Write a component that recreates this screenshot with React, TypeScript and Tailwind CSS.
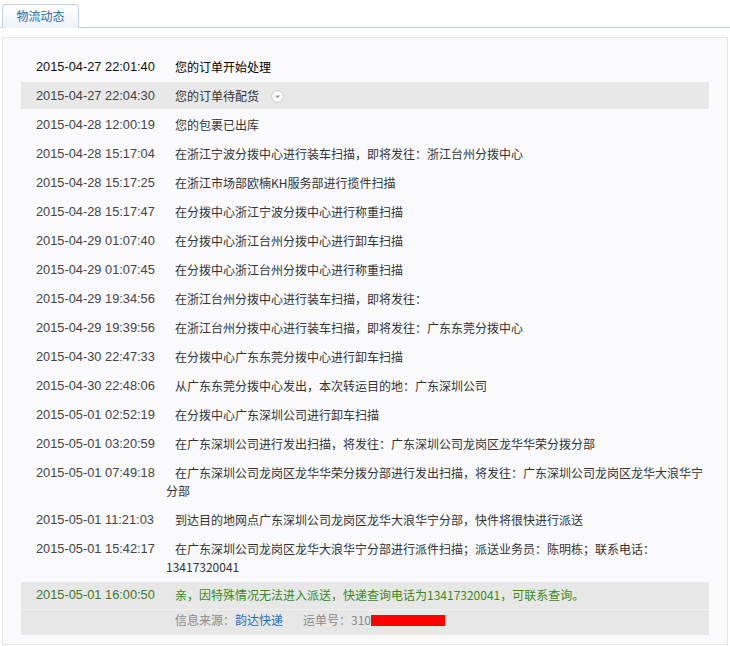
import React from 'react';

type Row = { time: string; text: string };

const rows: Row[] = [
  { time: '2015-04-27 22:01:40', text: '您的订单开始处理' },
  { time: '2015-04-27 22:04:30', text: '您的订单待配货' },
  { time: '2015-04-28 12:00:19', text: '您的包裹已出库' },
  { time: '2015-04-28 15:17:04', text: '在浙江宁波分拨中心进行装车扫描，即将发往：浙江台州分拨中心' },
  { time: '2015-04-28 15:17:25', text: '在浙江市场部欧楠KH服务部进行揽件扫描' },
  { time: '2015-04-28 15:17:47', text: '在分拨中心浙江宁波分拨中心进行称重扫描' },
  { time: '2015-04-29 01:07:40', text: '在分拨中心浙江台州分拨中心进行卸车扫描' },
  { time: '2015-04-29 01:07:45', text: '在分拨中心浙江台州分拨中心进行称重扫描' },
  { time: '2015-04-29 19:34:56', text: '在浙江台州分拨中心进行装车扫描，即将发往：' },
  { time: '2015-04-29 19:39:56', text: '在浙江台州分拨中心进行装车扫描，即将发往：广东东莞分拨中心' },
  { time: '2015-04-30 22:47:33', text: '在分拨中心广东东莞分拨中心进行卸车扫描' },
  { time: '2015-04-30 22:48:06', text: '从广东东莞分拨中心发出，本次转运目的地：广东深圳公司' },
  { time: '2015-05-01 02:52:19', text: '在分拨中心广东深圳公司进行卸车扫描' },
  { time: '2015-05-01 03:20:59', text: '在广东深圳公司进行发出扫描，将发往：广东深圳公司龙岗区龙华华荣分拨分部' },
  {
    time: '2015-05-01 07:49:18',
    text: '在广东深圳公司龙岗区龙华华荣分拨分部进行发出扫描，将发往：广东深圳公司龙岗区龙华大浪华宁分部',
  },
  { time: '2015-05-01 11:21:03', text: '到达目的地网点广东深圳公司龙岗区龙华大浪华宁分部，快件将很快进行派送' },
  {
    time: '2015-05-01 15:42:17',
    text: '在广东深圳公司龙岗区龙华大浪华宁分部进行派件扫描；派送业务员：陈明栋；联系电话：13417320041',
  },
];

const cjk = "font-['SimSun','Noto_Sans_CJK_SC',sans-serif]";

function Arrow() {
  return (
    <svg width="13" height="13" viewBox="0 0 13 13" className="ml-[12px] inline-block align-[-2px]">
      <circle cx="6.5" cy="6.5" r="5.8" fill="#fff" stroke="#c8c8c8" strokeWidth="1" />
      <path d="M4 5.5 L9 5.5 L6.5 8.2 Z" fill="#999" />
    </svg>
  );
}

export default function App() {
  return (
    <div className={`w-[730px] h-[646px] bg-white overflow-hidden text-[12px] ${cjk}`}>
      <div className="pt-[4px] border-b border-[#c3cfdd]">
        <div className="ml-[2px] w-[77px] h-[24px] -mb-px rounded-t-[4px] border border-[#c3d1e2] border-b-[#eef3f9] bg-gradient-to-b from-white to-[#edf3fa] flex items-center justify-center text-[#2a6aa0] text-[12px] leading-[18px]">
          物流动态
        </div>
      </div>

      <div className="mt-[9px] mx-[2px] h-[608px] border border-[#e6e6e8] bg-[#fafafc] pt-[15px] px-[18px] flex flex-col gap-[2px]">
        {rows.map((r, i) => (
          <div
            key={r.time}
            className={`flex pl-[15px] pr-[3px] pt-[5px] pb-[4px] leading-[18px] ${
              i === 1 ? 'bg-[#e8e8e8]' : ''
            }`}
          >
            <div
              className={`w-[130px] shrink-0 font-['Tahoma','Liberation_Sans',sans-serif] text-[12.8px] ${
                i === 0 ? 'text-[#111]' : 'text-[#444]'
              }`}
            >
              {r.time}
            </div>
            <div className={`flex-1 indent-[9px] ${i === 0 ? 'text-black' : 'text-[#333]'}`}>
              {r.text}
              {i === 1 && <Arrow />}
            </div>
          </div>
        ))}

        <div className="bg-[#e7e7e7] leading-[18px]">
          <div className="flex pl-[15px] pr-[3px] pt-[4px] pb-[5px] border-b border-[#f0f0f0]">
            <div className="w-[130px] shrink-0 font-['Tahoma','Liberation_Sans',sans-serif] text-[12.8px] text-[#3e7a23]">
              2015-05-01 16:00:50
            </div>
            <div className="flex-1 indent-[9px] text-[#3a8a1a]">
              亲，因特殊情况无法进入派送，快递查询电话为13417320041，可联系查询。
            </div>
          </div>
          <div className="flex pl-[15px] pr-[3px] pt-px pb-[6px]">
            <div className="w-[130px] shrink-0" />
            <div className="flex-1 pl-[9px] text-[#8a8a8a] flex items-center">
              <span>信息来源：</span>
              <span className="text-[#1f6fb8]">韵达快递</span>
              <span className="ml-[20px]">运单号：310</span>
              <span className="inline-block w-[74px] h-[11px] bg-[#ff0000]" />
            </div>
          </div>
        </div>
      </div>
    </div>
  );
}
